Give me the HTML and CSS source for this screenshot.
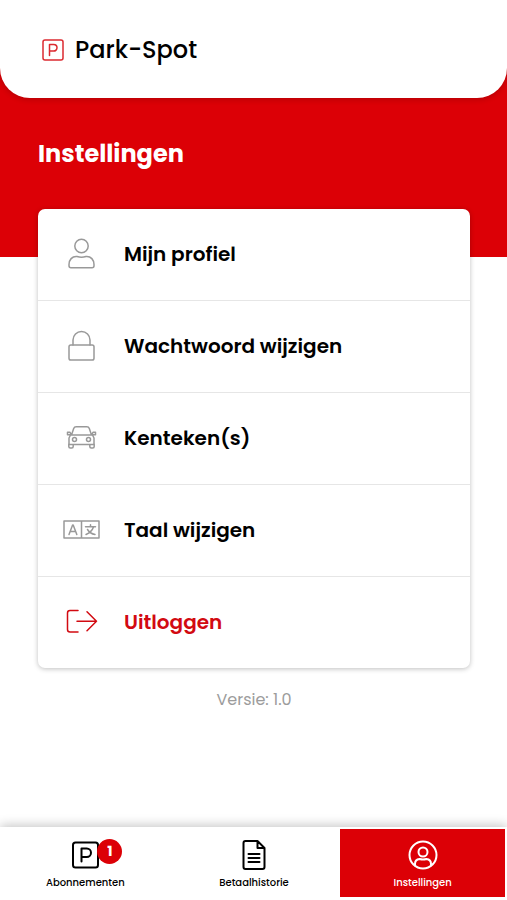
FILE: index.html
```html
<!DOCTYPE html>
<html lang="nl">
<head>
<meta charset="utf-8">
<meta name="viewport" content="width=device-width, initial-scale=1">
<title>Park-Spot – Instellingen</title>
<link rel="stylesheet" href="styles.css">
</head>
<body>
<div class="hero">
  <header class="topbar">
    <svg class="logo" viewBox="0 0 22 22" aria-hidden="true"><rect x="1" y="1" width="20" height="20" rx="2"/><path d="M7.500 16.500V5.500h4.200a3.300 3.300 0 0 1 0 6.600H7.500"/></svg>
    <span class="brand">Park-Spot</span>
  </header>
  <h1 class="title">Instellingen</h1>
</div>
<main class="content">
  <nav class="card" aria-label="Instellingen">
    <a class="row" href="#profiel">
      <svg class="icon" viewBox="0 0 40 40"><circle cx="19.500" cy="12" r="6.700"/><path d="M15 22.500c3 .9 6 .9 9 0 5-.5 8 3.500 8 8v1.200q0 2-2 2H9q-2 0-2-2v-1.200c0-4.500 3-8.500 8-8z"/></svg>
      <span>Mijn profiel</span>
    </a>
    <a class="row" href="#wachtwoord">
      <svg class="icon" viewBox="0 0 40 40"><rect x="7" y="19" width="25" height="15" rx="1.800"/><path d="M11 19v-5a8.500 8.500 0 0 1 17 0v5"/></svg>
      <span>Wachtwoord wijzigen</span>
    </a>
    <a class="row" href="#kenteken">
      <svg class="icon" viewBox="0 0 40 40"><path d="M9.500 17l2.200-6.500q.6-1.800 2.500-1.800h10.600q1.900 0 2.500 1.800l2.200 6.500M8.500 17h22l1.500 3v6.500H7V20zM9 16.500l-1-2.300H5.500v2.500h3M30 16.500l1-2.300h2.500v2.500h-3M6.800 26v2.500q0 1.500 1.500 1.500h1.400q1.500 0 1.500-1.500v-2M27.800 26.500v2q0 1.500 1.500 1.500h1.400q1.500 0 1.500-1.500V26"/><circle cx="12.500" cy="21.500" r="2"/><circle cx="26.500" cy="21.500" r="2"/></svg>
      <span>Kenteken(s)</span>
    </a>
    <a class="row" href="#taal">
      <svg class="icon" viewBox="0 0 40 40"><path d="M2 11h35v17H2zM19.500 11v17M7 24.500l3.600-9.500h.6l3.600 9.500M8.300 21.500h5.200M23.500 16.800h10M28.500 14.800v2M31.500 17c-1.200 3.500-4 6-7.500 7.500M25.500 19.500c1.500 2.500 4.500 4.500 7.500 5"/></svg>
      <span>Taal wijzigen</span>
    </a>
    <a class="row row-logout" href="#uitloggen">
      <svg class="icon" viewBox="0 0 40 40"><path d="M16 8.500H8q-2.500 0-2.500 2.500v16.500q0 2.500 2.500 2.500h8M15 19.200h19.500M25 9.700l9.500 9.500-9.500 9.500"/></svg>
      <span>Uitloggen</span>
    </a>
  </nav>
  <p class="version">Versie: 1.0</p>
</main>
<nav class="tabs" aria-label="Hoofdmenu">
  <a class="tab" href="#abonnementen">
    <span class="tab-icon">
      <svg viewBox="0 0 32 32"><rect x="4" y="3.500" width="25" height="25" rx="2.500"/><path d="M12.500 22.500V9.500h5.300a4.200 4.200 0 0 1 0 8.400h-5.300"/></svg>
      <span class="badge">1</span>
    </span>
    <span>Abonnementen</span>
  </a>
  <a class="tab" href="#betaalhistorie">
    <span class="tab-icon">
      <svg viewBox="0 0 32 32"><path d="M19.500 2H7.500q-2 0-2 2v24q0 2 2 2h17q2 0 2-2V9zM19.500 2v7h7M10.500 15h11M10.500 19h11M10.500 23h11"/></svg>
    </span>
    <span>Betaalhistorie</span>
  </a>
  <a class="tab tab-active" href="#instellingen" aria-current="page">
    <span class="tab-icon">
      <svg viewBox="0 0 32 32"><circle cx="16" cy="16" r="13.500"/><circle cx="16" cy="13" r="4.500"/><path d="M8 26.500V25q0-4.500 4.500-5 3.500 1 7 0 4.500.5 4.500 5v1.500"/></svg>
    </span>
    <span>Instellingen</span>
  </a>
</nav>
</body>
</html>
```
FILE: styles.css
```css
* { box-sizing: border-box; }

body {
  margin: 0;
  min-height: 100vh;
  display: flex;
  flex-direction: column;
  background: #fff;
  color: #000;
  font-family: Poppins, Inter, sans-serif;
}

a { color: inherit; text-decoration: none; }

svg {
  fill: none;
  stroke: currentColor;
  stroke-linecap: round;
  stroke-linejoin: round;
}

.hero {
  background: #dc0006;
  padding-bottom: 85px;
}

.topbar {
  display: flex;
  align-items: center;
  gap: 11px;
  padding: 32px 42px 30px;
  background: #fff;
  border-radius: 0 0 30px 30px;
  box-shadow: 0 1px 6px rgba(0, 0, 0, 0.2);
}

.logo {
  width: 22px;
  height: 22px;
  color: #dc2a30;
  stroke-width: 1.5;
}

.brand {
  font-size: 24px;
  line-height: 36px;
  font-weight: 500;
}

.title {
  margin: 0;
  padding: 38px 38px 0;
  color: #fff;
  font-size: 24px;
  line-height: 36px;
  font-weight: 700;
}

.content {
  flex: 1;
  margin-top: -48px;
  padding: 0 37px 24px 38px;
}

.card {
  background: #fff;
  border-radius: 7px;
  box-shadow: 0 1px 5px rgba(0, 0, 0, 0.25);
}

.row {
  display: flex;
  align-items: center;
  gap: 22px;
  padding: 25px 24px 26px;
  font-size: 20px;
  line-height: 40px;
  font-weight: 600;
}

.row + .row { border-top: 1px solid #e6e6e6; }

.icon {
  flex: none;
  width: 40px;
  height: 40px;
  color: #999;
  stroke-width: 1.5;
}

.row-logout,
.row-logout .icon { color: #d20a11; }

.version {
  margin: 20px 0 0;
  color: #9c9c9c;
  font-size: 16px;
  line-height: 24px;
  text-align: center;
}

.tabs {
  display: grid;
  grid-template-columns: repeat(3, 1fr);
  gap: 4px;
  padding: 2px 2px 3px 3px;
  background: #fff;
  box-shadow: 0 -2px 10px rgba(0, 0, 0, 0.22);
}

.tab {
  display: flex;
  flex-direction: column;
  align-items: center;
  gap: 4px;
  padding: 10px 0 6px;
  font-size: 10px;
  line-height: 16px;
  font-weight: 500;
}

.tab-active {
  background: #dc0006;
  color: #fff;
}

.tab-icon {
  position: relative;
  height: 32px;
}

.tab-icon svg {
  display: block;
  width: 32px;
  height: 32px;
  stroke-width: 2;
}

.badge {
  position: absolute;
  top: 0;
  left: 28px;
  width: 25px;
  height: 25px;
  border-radius: 50%;
  background: #dc0006;
  color: #fff;
  font-size: 14px;
  line-height: 25px;
  font-weight: 700;
  text-align: center;
}
```
